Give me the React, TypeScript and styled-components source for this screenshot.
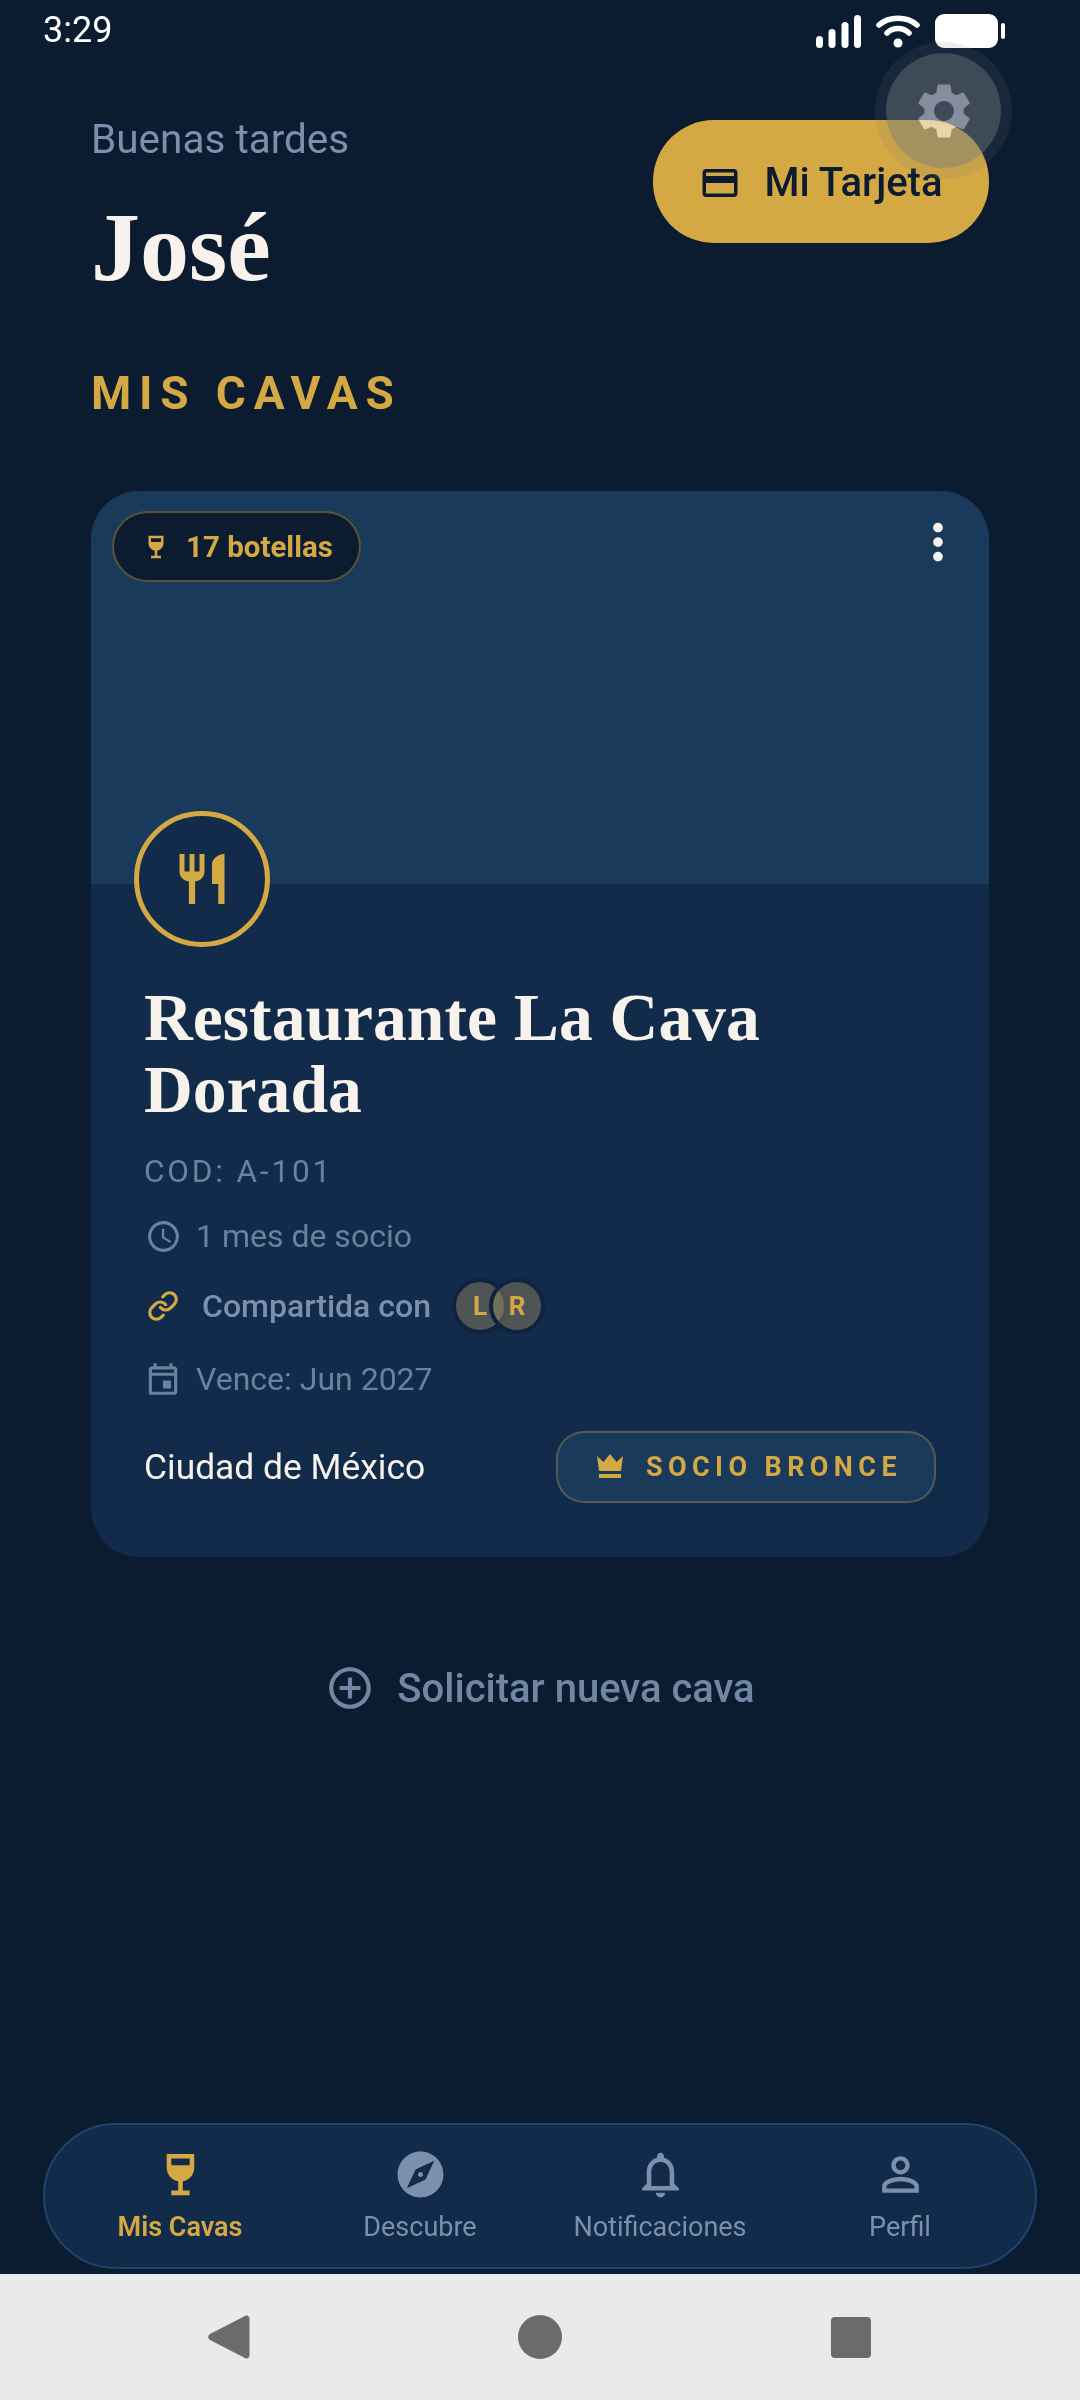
import React from 'react';
import styled, { createGlobalStyle } from 'styled-components';
import {
  MdOutlineCreditCard, MdSettings, MdWineBar, MdMoreVert, MdRestaurant, MdAccessTime,
  MdOutlineEvent, MdOutlineAddCircleOutline, MdExplore, MdOutlineNotifications, MdPersonOutline,
} from 'react-icons/md';
import { Link as LinkIcon } from 'lucide-react';

const gold = '#D4A843';
const muted = '#7A90AE';
const dim = '#6A81A0';
const cream = '#F7F3EC';

const Global = createGlobalStyle`
  html, body { margin: 0; padding: 0; background: #0B1B30; }
  * { box-sizing: border-box; }
  body { font-family: Roboto, "Liberation Sans", sans-serif; }
`;

const Page = styled.div`
  position: relative;
  width: 1080px;
  height: 2400px;
  background: #0B1B30;
  display: flex;
  flex-direction: column;
  overflow: hidden;
`;

const StatusBar = styled.div`
  height: 60px;
  flex: none;
  display: flex;
  align-items: center;
  justify-content: space-between;
  padding: 0 75px 0 43px;
  color: #fff;
`;
const Clock = styled.span`
  font-size: 36px;
  line-height: 60px;
`;
const StatusIcons = styled.div`
  display: flex;
  align-items: center;
  gap: 15px;
  height: 60px;
  margin-top: 2px;
`;

const Main = styled.main`
  flex: 1;
  display: flex;
  flex-direction: column;
  padding: 0 91px;
`;

const Header = styled.header`
  display: flex;
  justify-content: space-between;
  align-items: flex-start;
`;
const Greeting = styled.div`
  display: flex;
  flex-direction: column;
`;
const Hello = styled.div`
  margin-top: 55px;
  font-size: 40.5px;
  line-height: 48px;
  color: ${muted};
`;
const Name = styled.h1`
  margin: 28px 0 0;
  font-family: "Liberation Serif", serif;
  font-size: 98px;
  font-weight: 700;
  line-height: 112px;
  color: ${cream};
`;
const CardButton = styled.button`
  margin-top: 60px;
  width: 336px;
  height: 123px;
  padding: 2px 0 0;
  border: none;
  border-radius: 61px;
  background: ${gold};
  color: #0B1B30;
  display: flex;
  align-items: center;
  justify-content: center;
  gap: 23px;
  font-family: inherit;
  font-size: 40px;
  font-weight: 500;
`;
const SettingsFab = styled.div`
  position: absolute;
  top: 53px;
  left: 886px;
  width: 115px;
  height: 115px;
  border-radius: 50%;
  background: rgba(115, 121, 126, 0.5);
  box-shadow: 0 0 0 11px rgba(115, 121, 126, 0.13);
  display: flex;
  align-items: center;
  justify-content: center;
`;
const Gear = styled(MdSettings)`
  color: rgb(70, 67, 72);
  mix-blend-mode: plus-lighter;
`;

const SectionTitle = styled.h2`
  margin: 65px 0 0;
  font-size: 46px;
  font-weight: 700;
  line-height: 50px;
  letter-spacing: 0.17em;
  color: ${gold};
`;

const Card = styled.section`
  margin-top: 73px;
  border-radius: 48px;
  overflow: hidden;
  background: #132B4A;
  display: flex;
  flex-direction: column;
`;
const Hero = styled.div`
  height: 393px;
  background: #1A3A5C;
  display: flex;
  align-items: flex-start;
  justify-content: space-between;
  padding: 20px 22px 0 21px;
`;
const BottleBadge = styled.div`
  width: 249px;
  height: 71px;
  border-radius: 36px;
  border: 2px solid rgba(212, 168, 67, 0.4);
  background: #0B1B30;
  color: ${gold};
  display: flex;
  align-items: center;
  padding-left: 27px;
  gap: 15px;
  font-size: 29.5px;
  font-weight: 700;
`;
const Dots = styled.div`
  color: ${cream};
  display: flex;
  margin-top: 2px;
`;
const CardBody = styled.div`
  display: flex;
  flex-direction: column;
  padding: 0 53px 54px;
`;
const VenueIcon = styled.div`
  width: 136px;
  height: 136px;
  margin: -73px 0 0 -10px;
  border-radius: 50%;
  border: 5px solid ${gold};
  background: #132B4A;
  color: ${gold};
  display: flex;
  align-items: center;
  justify-content: center;
`;
const Title = styled.h3`
  margin: 35px 0 0;
  font-family: "Liberation Serif", serif;
  font-size: 67.6px;
  font-weight: 700;
  line-height: 72px;
  color: ${cream};
`;
const Code = styled.div`
  margin-top: 26px;
  font-size: 31.5px;
  line-height: 40px;
  letter-spacing: 0.09em;
  color: ${dim};
`;
const Meta = styled.div<{ $gap: number; $top: number; $strong?: boolean }>`
  margin-top: ${(p) => p.$top}px;
  height: 44px;
  display: flex;
  align-items: center;
  gap: ${(p) => p.$gap}px;
  font-size: 32px;
  font-weight: ${(p) => (p.$strong ? 500 : 400)};
  color: ${(p) => (p.$strong ? muted : dim)};
`;
const IconBox = styled.span<{ $color?: string }>`
  width: 38px;
  height: 38px;
  flex: none;
  display: flex;
  align-items: center;
  justify-content: center;
  color: ${(p) => p.$color ?? dim};
`;
const Avatars = styled.div`
  display: flex;
  margin-left: 1px;
`;
const Avatar = styled.div`
  width: 56px;
  height: 56px;
  border-radius: 50%;
  border: 4px solid #0F2340;
  background: rgba(170, 150, 100, 0.4);
  color: ${gold};
  font-size: 26px;
  font-weight: 700;
  display: flex;
  align-items: center;
  justify-content: center;
  & + & {
    margin-left: -19px;
  }
`;
const CardFooter = styled.div`
  margin-top: 30px;
  display: flex;
  align-items: center;
  justify-content: space-between;
`;
const City = styled.span`
  font-size: 35.4px;
  color: ${cream};
`;
const Tier = styled.div`
  width: 380px;
  height: 72px;
  padding-left: 6px;
  border-radius: 28px;
  border: 2px solid rgba(212, 168, 67, 0.3);
  background: #1A3A5C;
  color: ${gold};
  display: flex;
  align-items: center;
  justify-content: center;
  gap: 22px;
  font-size: 27px;
  font-weight: 700;
  letter-spacing: 0.2em;
`;

const RequestRow = styled.div`
  margin-top: 106px;
  display: flex;
  align-items: center;
  justify-content: center;
  gap: 22px;
  font-size: 40px;
  font-weight: 500;
  color: #7086A3;
`;

const NavPill = styled.nav`
  flex: none;
  margin: 0 43px 5px;
  height: 146px;
  border-radius: 73px;
  border: 2px solid #1E4470;
  background: #132B4A;
  display: grid;
  grid-template-columns: repeat(4, 1fr);
  padding: 0 15px;
`;
const NavItem = styled.div<{ $active?: boolean }>`
  display: flex;
  flex-direction: column;
  align-items: center;
  justify-content: flex-start;
  padding-top: 22px;
  gap: 8px;
  font-size: 27px;
  line-height: 34px;
  font-weight: ${(p) => (p.$active ? 600 : 400)};
  color: ${(p) => (p.$active ? gold : muted)};
`;

const AndroidBar = styled.div`
  flex: none;
  height: 126px;
  background: #E8EAEC;
  display: grid;
  grid-template-columns: repeat(3, 311px);
  justify-content: center;
  align-items: center;
  justify-items: center;
`;

const SignalIcon = () => (
  <svg width="45" height="33" viewBox="0 0 45 33" fill="#fff">
    <rect x="0" y="21" width="7" height="12" rx="3.5" />
    <rect x="12.5" y="14" width="7" height="19" rx="3.5" />
    <rect x="25.5" y="7" width="7" height="26" rx="3.5" />
    <rect x="38" y="0" width="7" height="33" rx="3.5" />
  </svg>
);
const WifiIcon = () => (
  <svg width="44" height="34" viewBox="0 0 44 34" fill="none" stroke="#fff" strokeWidth="5.5" strokeLinecap="round">
    <path d="M3 11C13 2 31 2 41 11" />
    <path d="M11 19C17 13 27 13 33 19" />
    <circle cx="22" cy="29" r="4.5" fill="#fff" stroke="none" />
  </svg>
);
const BatteryIcon = () => (
  <svg width="70" height="34" viewBox="0 0 70 34" fill="#fff">
    <rect x="0" y="0" width="63" height="34" rx="9" />
    <rect x="66" y="9" width="4" height="16" rx="2" />
  </svg>
);
const CrownIcon = () => (
  <svg width="28" height="26" viewBox="0 0 28 26" fill={gold}>
    <path d="M1 2l6.5 6L14 0l6.5 8L27 2l-2 15H3z" />
    <rect x="3" y="20" width="22" height="4" />
  </svg>
);

const BackIcon = () => (
  <svg width="42" height="44" viewBox="0 0 42 44" fill="#6B6B6B">
    <path d="M36 1.5c2.6-2 5.5-.6 5.5 2.5v36c0 3.1-2.9 4.5-5.5 2.5L2 25c-2.4-1.6-2.4-4.4 0-6z" />
  </svg>
);
const HomeIcon = () => (
  <svg width="44" height="44" viewBox="0 0 44 44" fill="#6B6B6B">
    <circle cx="22" cy="22" r="22" />
  </svg>
);
const RecentIcon = () => (
  <svg width="40" height="41" viewBox="0 0 40 41" fill="#6B6B6B">
    <rect width="40" height="41" rx="4" />
  </svg>
);

export default function App() {
  return (
    <Page>
      <Global />
      <StatusBar>
        <Clock>3:29</Clock>
        <StatusIcons>
          <SignalIcon />
          <WifiIcon />
          <BatteryIcon />
        </StatusIcons>
      </StatusBar>
      <Main>
        <Header>
          <Greeting>
            <Hello>Buenas tardes</Hello>
            <Name>José</Name>
          </Greeting>
          <CardButton>
            <MdOutlineCreditCard size={42} />
            Mi Tarjeta
          </CardButton>
        </Header>
        <SectionTitle>MIS CAVAS</SectionTitle>
        <Card>
          <Hero>
            <BottleBadge>
              <MdWineBar size={30} />
              17 botellas
            </BottleBadge>
            <Dots>
              <MdMoreVert size={58} />
            </Dots>
          </Hero>
          <CardBody>
            <VenueIcon>
              <MdRestaurant size={60} />
            </VenueIcon>
            <Title>
              Restaurante La Cava
              <br />
              Dorada
            </Title>
            <Code>COD: A-101</Code>
            <Meta $gap={14} $top={22}>
              <IconBox>
                <MdAccessTime size={37} />
              </IconBox>
              1 mes de socio
            </Meta>
            <Meta $gap={20} $top={26} $strong>
              <IconBox $color={gold}>
                <LinkIcon size={32} strokeWidth={2.4} />
              </IconBox>
              Compartida con
              <Avatars>
                <Avatar>L</Avatar>
                <Avatar>R</Avatar>
              </Avatars>
            </Meta>
            <Meta $gap={14} $top={29}>
              <IconBox>
                <MdOutlineEvent size={38} />
              </IconBox>
              Vence: Jun 2027
            </Meta>
            <CardFooter>
              <City>Ciudad de México</City>
              <Tier>
                <CrownIcon />
                SOCIO BRONCE
              </Tier>
            </CardFooter>
          </CardBody>
        </Card>
        <RequestRow>
          <MdOutlineAddCircleOutline size={50} />
          Solicitar nueva cava
        </RequestRow>
      </Main>
      <NavPill>
        <NavItem $active>
          <MdWineBar size={55} />
          Mis Cavas
        </NavItem>
        <NavItem>
          <MdExplore size={55} />
          Descubre
        </NavItem>
        <NavItem>
          <MdOutlineNotifications size={55} />
          Notificaciones
        </NavItem>
        <NavItem>
          <MdPersonOutline size={55} />
          Perfil
        </NavItem>
      </NavPill>
      <AndroidBar>
        <BackIcon />
        <HomeIcon />
        <RecentIcon />
      </AndroidBar>
      <SettingsFab>
        <Gear size={66} />
      </SettingsFab>
    </Page>
  );
}
